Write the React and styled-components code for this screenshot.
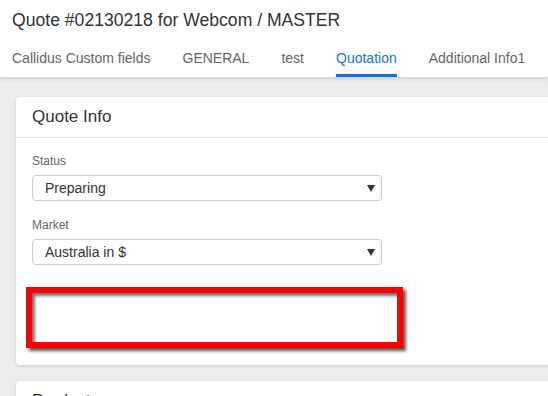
import React from "react";
import styled, { createGlobalStyle } from "styled-components";

const GlobalStyle = createGlobalStyle`
  html, body {
    margin: 0;
    padding: 0;
    background: #ebeced;
    font-family: "Liberation Sans", Arial, sans-serif;
    overflow: hidden;
  }
`;

const Header = styled.header`
  background: #fff;
  padding: 8px 12px 0;
  box-shadow: 0 2px 4px rgba(0, 0, 0, 0.12);
  position: relative;
  z-index: 1;
`;

const Title = styled.h1`
  margin: 0;
  font-size: 17.6px;
  line-height: 24px;
  font-weight: normal;
  color: #333;
`;

const Tabs = styled.nav`
  display: flex;
  gap: 32px;
  margin-top: 8px;
`;

const Tab = styled.div`
  font-size: 14px;
  line-height: 20px;
  padding: 8px 0 6px;
  color: ${(p) => (p.$active ? "#1a73d3" : "#666")};
  border-bottom: 3px solid ${(p) => (p.$active ? "#1a73d3" : "transparent")};
  white-space: nowrap;
  cursor: pointer;
`;

const Main = styled.main`
  padding: 20px 0 0 16px;
  display: flex;
  flex-direction: column;
  gap: 16px;
`;

const Card = styled.section`
  width: 620px;
  background: #fff;
  border-radius: 4px;
  box-shadow: 0 1px 3px rgba(0, 0, 0, 0.15);
`;

const CardHeader = styled.h2`
  margin: 0;
  padding: 10px 16px 10px;
  font-size: 17px;
  line-height: 20px;
  font-weight: normal;
  color: #333;
  border-bottom: 1px solid #e6e6e6;
`;

const CardBody = styled.div`
  padding: 15px 16px 17px;
  display: flex;
  flex-direction: column;
`;

const Field = styled.div`
  display: flex;
  flex-direction: column;
  gap: 6px;
  margin-bottom: 16px;
`;

const Label = styled.label`
  font-size: 12px;
  line-height: 16px;
  color: #666;
`;

const SelectBox = styled.div`
  width: 350px;
  height: 26px;
  box-sizing: border-box;
  border: 1px solid #ccc;
  border-radius: 4px;
  padding: 0 6px 0 12px;
  display: flex;
  align-items: center;
  justify-content: space-between;
  font-size: 14px;
  color: #333;
  cursor: pointer;
`;

const Highlight = styled.div`
  width: 377px;
  height: 61px;
  margin: 6px 0 0 -6px;
  box-sizing: border-box;
  border: 6px solid #ff0000;
  box-shadow: 3px 3px 3px rgba(0, 0, 0, 0.65), inset 3px 3px 3px rgba(0, 0, 0, 0.55);
`;

const Caret = () => (
  <svg width="8" height="7" viewBox="0 0 8 7">
    <path d="M0 0h8L4 7z" fill="#333" />
  </svg>
);

const Select = ({ value }) => (
  <SelectBox>
    <span>{value}</span>
    <Caret />
  </SelectBox>
);

export default function App() {
  const tabs = ["Callidus Custom fields", "GENERAL", "test", "Quotation", "Additional Info1"];
  return (
    <>
      <GlobalStyle />
      <Header>
        <Title>Quote #02130218 for Webcom / MASTER</Title>
        <Tabs>
          {tabs.map((t) => (
            <Tab key={t} $active={t === "Quotation"}>
              {t}
            </Tab>
          ))}
        </Tabs>
      </Header>
      <Main>
        <Card>
          <CardHeader>Quote Info</CardHeader>
          <CardBody>
            <Field>
              <Label>Status</Label>
              <Select value="Preparing" />
            </Field>
            <Field>
              <Label>Market</Label>
              <Select value="Australia in $" />
            </Field>
            <Highlight />
          </CardBody>
        </Card>
        <Card>
          <CardHeader>Products</CardHeader>
        </Card>
      </Main>
    </>
  );
}
